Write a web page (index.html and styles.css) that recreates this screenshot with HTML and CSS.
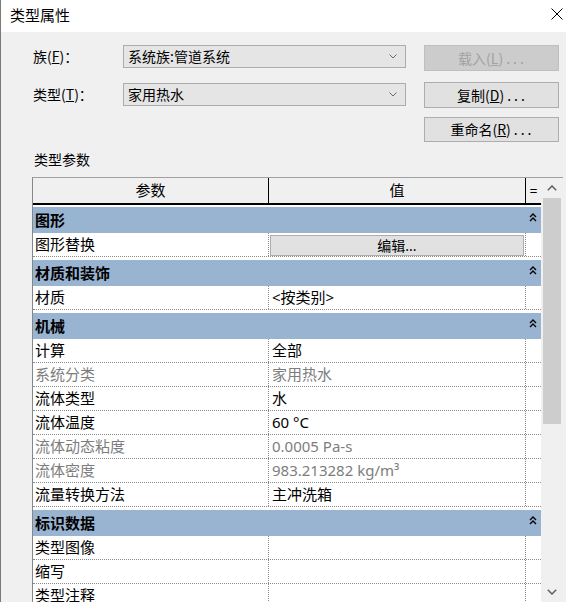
FILE: index.html
```
<!DOCTYPE html>
<html lang="zh-CN">
<head>
<meta charset="utf-8">
<title>类型属性</title>
<link rel="stylesheet" href="styles.css">
</head>
<body>
<div class="window">
  <div class="titlebar">
    <span class="title">类型属性</span>
    <svg class="close" width="12" height="12" viewBox="0 0 12 12"><path d="M0.5 0.5 L11.5 11.5 M11.5 0.5 L0.5 11.5" stroke="#000" stroke-width="1" fill="none"/></svg>
  </div>
  <div class="body">
    <div class="form">
      <div class="flabel">族(<u>F</u>)：</div>
      <div class="combo"><span>系统族:管道系统</span><svg class="chev" width="8" height="5" viewBox="0 0 8 5"><path d="M0.5 0.5 L4 4 L7.5 0.5" stroke="#6a6a6a" stroke-width="1" fill="none"/></svg></div>
      <div class="btn disabled">载入(<u>L</u>)<span class="dots">...</span></div>

      <div class="flabel r2">类型(<u>T</u>)：</div>
      <div class="combo r2"><span>家用热水</span><svg class="chev" width="8" height="5" viewBox="0 0 8 5"><path d="M0.5 0.5 L4 4 L7.5 0.5" stroke="#6a6a6a" stroke-width="1" fill="none"/></svg></div>
      <div class="btn">复制(<u>D</u>)<span class="dots">...</span></div>

      <div></div>
      <div></div>
      <div class="btn short">重命名(<u>R</u>)<span class="dots">...</span></div>
    </div>

    <div class="section-label">类型参数</div>

    <div class="frame">
      <div class="grid">
        <div class="ghead">
          <div class="h1">参数</div>
          <div class="h2">值</div>
          <div class="h3">=</div>
        </div>

        <div class="group first"><span class="gname">图形</span><svg class="gchev" width="8" height="9" viewBox="0 0 8 9"><path d="M1 4 L4 1 L7 4 M1 8 L4 5 L7 8" stroke="#000" stroke-width="1.4" fill="none"/></svg></div>
        <div class="row"><div class="c1">图形替换</div><div class="c2 btncell"><div class="edit">编辑...</div></div><div class="c3"></div></div>

        <div class="group"><span class="gname">材质和装饰</span><svg class="gchev" width="8" height="9" viewBox="0 0 8 9"><path d="M1 4 L4 1 L7 4 M1 8 L4 5 L7 8" stroke="#000" stroke-width="1.4" fill="none"/></svg></div>
        <div class="row"><div class="c1">材质</div><div class="c2">&lt;按类别&gt;</div><div class="c3"></div></div>

        <div class="group"><span class="gname">机械</span><svg class="gchev" width="8" height="9" viewBox="0 0 8 9"><path d="M1 4 L4 1 L7 4 M1 8 L4 5 L7 8" stroke="#000" stroke-width="1.4" fill="none"/></svg></div>
        <div class="row"><div class="c1">计算</div><div class="c2">全部</div><div class="c3"></div></div>
        <div class="row dim"><div class="c1">系统分类</div><div class="c2">家用热水</div><div class="c3"></div></div>
        <div class="row"><div class="c1">流体类型</div><div class="c2">水</div><div class="c3"></div></div>
        <div class="row"><div class="c1">流体温度</div><div class="c2">60 °C</div><div class="c3"></div></div>
        <div class="row dim"><div class="c1">流体动态粘度</div><div class="c2">0.0005 Pa-s</div><div class="c3"></div></div>
        <div class="row dim"><div class="c1">流体密度</div><div class="c2">983.213282 kg/m³</div><div class="c3"></div></div>
        <div class="row"><div class="c1">流量转换方法</div><div class="c2">主冲洗箱</div><div class="c3"></div></div>

        <div class="group"><span class="gname">标识数据</span><svg class="gchev" width="8" height="9" viewBox="0 0 8 9"><path d="M1 4 L4 1 L7 4 M1 8 L4 5 L7 8" stroke="#000" stroke-width="1.4" fill="none"/></svg></div>
        <div class="row"><div class="c1">类型图像</div><div class="c2"></div><div class="c3"></div></div>
        <div class="row"><div class="c1">缩写</div><div class="c2"></div><div class="c3"></div></div>
        <div class="row"><div class="c1">类型注释</div><div class="c2"></div><div class="c3"></div></div>
      </div>
      <div class="vscroll">
        <div class="sbtn up"><svg width="10" height="6" viewBox="0 0 10 6"><path d="M0.8 5.2 L5 1 L9.2 5.2" stroke="#606060" stroke-width="1.5" fill="none"/></svg></div>
        <div class="track"><div class="thumb"></div></div>
        <div class="sbtn down"><svg width="10" height="6" viewBox="0 0 10 6"><path d="M0.8 0.8 L5 5 L9.2 0.8" stroke="#606060" stroke-width="1.5" fill="none"/></svg></div>
      </div>
    </div>
  </div>
</div>
</body>
</html>
```
FILE: styles.css
```
* { box-sizing: border-box; }

body {
  margin: 0;
  width: 566px;
  height: 602px;
  overflow: hidden;
  background: #f0f0f0;
  font-family: "Noto Sans", "Noto Sans CJK SC", sans-serif;
  color: #000;
}

.window {
  height: 602px;
  border-left: 1px solid #7a7a7a;
  display: flex;
  flex-direction: column;
}

.titlebar {
  height: 32px;
  flex: none;
  background: #fff;
  display: flex;
  align-items: center;
  justify-content: space-between;
  padding-left: 9px;
  padding-right: 3px;
}

.title {
  font-family: "Noto Sans CJK SC", sans-serif;
  font-size: 15px;
  line-height: 20px;
  margin-top: -3px;
}

.close { margin-top: -4px; }

.body {
  flex: 1;
  padding-top: 13px;
  overflow: hidden;
}

/* top form */
.form {
  display: grid;
  grid-template-columns: 72px 283px 135px;
  grid-template-rows: 37px 35px 25px;
  column-gap: 18px;
  align-items: start;
  margin-left: 32px;
  font-family: "Noto Sans CJK SC", sans-serif;
  font-size: 14px;
}

.flabel {
  height: 23px;
  line-height: 23px;
  white-space: nowrap;
}

.r2 { margin-top: 1px; }

.combo {
  height: 23px;
  background: #e5e5e5;
  border: 1px solid #acacac;
  display: flex;
  align-items: center;
  justify-content: space-between;
  padding: 0 8px 0 4px;
  line-height: 21px;
}

.chev { flex: none; }

.btn {
  height: 26px;
  background: #e1e1e1;
  border: 1px solid #adadad;
  text-align: center;
  line-height: 24px;
  padding-left: 2px;
}

.btn.short { height: 25px; line-height: 23px; }

.btn.disabled {
  background: #cccccc;
  border-color: #bfbfbf;
  color: #a2a2a2;
}

.dots { letter-spacing: 3px; margin-left: 3px; }

u { text-decoration: underline; text-underline-offset: 1px; }

.section-label {
  margin: 7px 0 8px 33px;
  height: 20px;
  line-height: 20px;
  font-family: "Noto Sans CJK SC", sans-serif;
  font-size: 14px;
}

/* property grid */
.frame {
  margin-left: 31px;
  width: 531px;
  height: 430px;
  display: flex;
  border-top: 1px solid #a0a0a0;
  border-left: 1px solid #828790;
}

.grid {
  width: 508px;
  background: #fff;
  font-size: 15px;
}

.ghead {
  display: grid;
  grid-template-columns: 236px 257px 15px;
  height: 27px;
  background: #f0f0f0;
  border-bottom: 2px solid #000;
  margin-bottom: 2px;
}

.ghead > div {
  text-align: center;
  line-height: 25px;
}

.ghead .h1, .ghead .h2 { border-right: 1px solid #000; }
.ghead .h3 { font-size: 14px; }

.group {
  height: 26px;
  background: #99b4d1;
  display: grid;
  grid-template-columns: 493px 15px;
  margin-top: 3px;
}

.group.first { margin-top: 0; }

.gname {
  font-weight: bold;
  line-height: 25px;
  padding-left: 2px;
  font-family: "Noto Sans CJK SC", sans-serif;
}

.gchev { margin: 6px 0 0 3px; }

.row {
  display: grid;
  grid-template-columns: 236px 257px 15px;
  height: 24px;
  border-bottom: 1px dotted #8a8a8a;
  line-height: 23px;
}

.row .c1 {
  padding-left: 2px;
  border-right: 1px dotted #8a8a8a;
  white-space: nowrap;
}

.row .c2 {
  padding-left: 3px;
  border-right: 1px dotted #8a8a8a;
  white-space: nowrap;
}

.row.dim { color: #7d7d7d; }

.btncell { padding: 2px 1px 0 1px !important; }

.edit {
  height: 21px;
  background: #e1e1e1;
  border: 1px solid #adadad;
  text-align: center;
  line-height: 19px;
  font-size: 14px;
}

/* scrollbar */
.vscroll {
  width: 22px;
  background: #f0f0f0;
  display: flex;
  flex-direction: column;
}

.sbtn {
  height: 20px;
  display: flex;
  align-items: center;
  justify-content: center;
  flex: none;
}

.sbtn.up { align-items: flex-start; padding-top: 7px; }

.track {
  flex: 1;
  padding: 0 2px;
}

.thumb {
  height: 226px;
  background: #cdcdcd;
}

.sbtn.down { align-items: flex-start; padding-top: 2px; }
```
